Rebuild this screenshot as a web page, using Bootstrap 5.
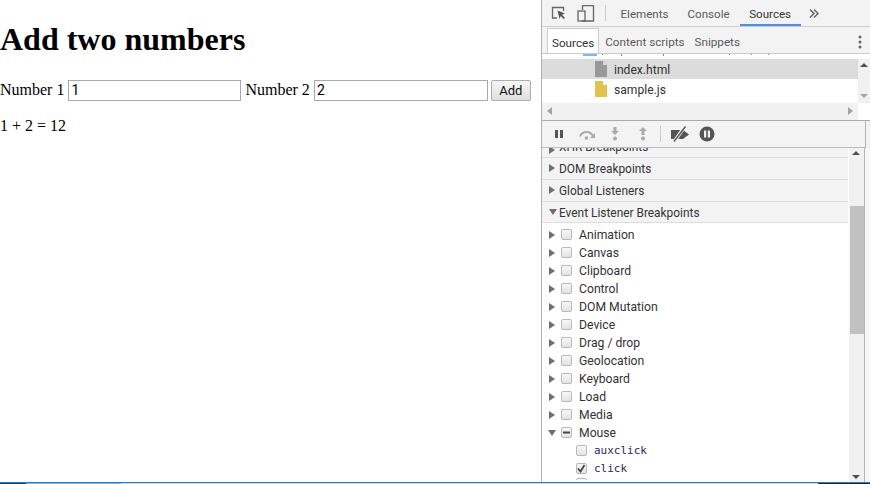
<!DOCTYPE html>
<html lang="en"><head><meta charset="utf-8"><title>Add two numbers</title>
<link rel="stylesheet" href="https://cdn.jsdelivr.net/npm/bootstrap@5.3.0/dist/css/bootstrap.min.css">
<style>
html,body{height:484px;overflow:hidden;background:#fff}
.stage{height:482px}
.pagepane{width:541px;font:16px/18px "Liberation Serif",serif;color:#000}
.pagepane h1{font:bold 32px/37px "Liberation Serif",serif;margin:21px 0 21px}
.formline{height:22px}
.pagepane label{margin-right:4px}
.numbox{width:173px;height:21px;border:1px solid #a9a9a9;padding:1px 2px;font:14px Roboto,sans-serif;color:#000;margin-right:4px;border-radius:0}
.numbox.second{width:174px}
.addbtn{width:40px;height:21px;margin-left:-1px;border:1px solid #adadad;border-radius:2px;background:linear-gradient(#f6f6f6,#dedede);font:13px Roboto,sans-serif;color:#111;padding:0}
.result{margin:16px 0 0}
.tools{width:329px;border-left:1px solid #b4b4b4;font:11.7px Roboto,sans-serif;color:#333;background:#f3f3f3}
.tabbar{height:27px;border-bottom:1px solid #ccc}
.tabbar svg{flex:none}
.sep{width:1px;height:16px;background:#ccc}
.tabsep{margin:0 5px 0 9px}
.dtab{height:26px;padding:0 9.500px;line-height:28px;color:#5a5a5a;font-size:11.600px}
.dtab.on{border-bottom:2px solid #4b8ef1;color:#333;width:61px;padding:0 0 0 9px;margin-left:1px}
.subbar{height:27px;border-bottom:1px solid #ccc;padding-left:5px}
.stab{height:26px;line-height:30px;padding:0 5px;color:#5a5a5a}
.stab.on{background:#fff;border:1px solid #ccc;border-bottom:0;color:#333;padding:0 4px;margin-top:1px;margin-right:1px;height:25px;line-height:28px}
.treewrap{height:67px;background:#fff;border-bottom:1px solid #aaa}
.treemain{width:316px;min-width:316px}
.treetop{height:5px;overflow:hidden;padding-left:41px;gap:4px;align-items:flex-start}
.folderbit{width:14px;height:2px;background:#7cb7f0}
.treerow{height:20px;padding-left:53px;font-size:12.100px;color:#333;line-height:18px;gap:7px}
.treerow span{padding-top:2px}
.treerow.sel{background:#dcdcdc}
.treerow svg{flex:none}
.hbar{height:17px;background:#f1f1f1;padding:0 5px}
.vbar{width:12px;height:44px;background:#f1f1f1;margin-top:5px;padding:4px 0 5px}
.arrowup{width:0;height:0;border:4px solid transparent;border-top:0;border-bottom:4px solid #505050}
.arrowdn{width:0;height:0;border:4px solid transparent;border-bottom:0;border-top:4px solid #a3a3a3}
.ctl{height:27px;border-bottom:1px solid #bbb;margin-right:4px;border-right:1px solid #b4b4b4;padding-left:12px}
.ctl svg{flex:none}
.lower{height:335px}
.bpane{width:307px;background:#fff;overflow:hidden}
.sechead{height:22px;background:#f3f3f3;border-bottom:1px solid #ddd;padding-left:7px;gap:4px;color:#333;font-size:11.900px;line-height:16px;margin-right:1px}
.sechead .lbl{padding-top:2px}
.sechead.evhead{height:21px;gap:2px;margin-bottom:3px}
.sechead.clip{height:10px;overflow:hidden;align-items:flex-end}
.sechead.clip span{display:block;margin-bottom:3px;line-height:14px}
.tri-r{width:0;height:0;border-left:6px solid #6e6e6e;border-top:4px solid transparent;border-bottom:4px solid transparent;flex:none}
.tri-d{width:0;height:0;border-top:6px solid #6e6e6e;border-left:4px solid transparent;border-right:4px solid transparent;flex:none}
.evrow{height:18px;padding-left:7px;font-size:12.200px;color:#333;white-space:nowrap}
.evrow .tri-d{margin-left:-1px;margin-right:-1px}
.tick{width:11px;height:11px;border:1px solid #b9b9b9;border-radius:2px;background:linear-gradient(#f8f8f8,#e2e2e2);margin:0 7px 0 6px;flex:none}
.evrow.sub{padding-left:34px;font:11px "DejaVu Sans Mono",monospace;color:#2a2a55}
.evrow.sub .tick{margin:0 7px 0 0}
.evrow.cut{height:2px;overflow:hidden;align-items:flex-start}
.tick svg{display:block}
.sbar{width:15px;background:#f1f1f1;padding:3px 0 3px 1px}
.thumb{width:14px;height:128px;background:#c1c1c1;margin-top:51px}
.arr2{margin-left:2px}
.sideedge{width:1px;background:#b4b4b4}
.rest{width:5px;background:#f7f7f7}
.taskstrip{height:2px;border-top:1px solid #1a7fd6;background:#cfd8df}
.taskstrip span{display:block;height:1px}
.seg-dark{width:26px;background:#10395c}
.seg-light{width:95px;background:#7ab5e6}
.seg-grow{flex:1 1 auto}
.seg-end{width:52px;background:#10202c}
</style></head>
<body>
<div class="stage d-flex">
 <main class="pagepane">
  <h1>Add two numbers</h1>
  <form class="formline d-flex align-items-center" onsubmit="return false">
   <label for="n1">Number 1</label><input id="n1" class="numbox" value="1">
   <label for="n2">Number 2</label><input id="n2" class="numbox second" value="2">
   <button class="addbtn">Add</button>
  </form>
  <p class="result">1 + 2 = 12</p>
 </main>
 <aside class="tools d-flex flex-column">
  <div class="tabbar d-flex align-items-center ps-2">
   <svg width="18" height="18" viewBox="0 0 18 18" fill="none"><path d="M7 14H2.500V3.500h11V7" stroke="#666" stroke-width="1.300"/><path d="M7.500 6.500l7.500 3-3 1.200 3 3.200-1.300 1.200-3-3.200-1.200 3z" fill="#555"/></svg>
   <svg class="ms-2" width="20" height="18" viewBox="0 0 20 18" fill="none"><path d="M6.500 6V1.700h11V17H6" stroke="#666" stroke-width="1.300"/><rect x="2" y="7" width="7" height="10" stroke="#666" stroke-width="1.300"/></svg>
   <span class="sep tabsep"></span>
   <span class="dtab">Elements</span><span class="dtab">Console</span><span class="dtab on">Sources</span>
   <svg class="ms-2" width="10" height="9" viewBox="0 0 10 9" fill="none" stroke="#666" stroke-width="1.500"><path d="M1 .5l4 4-4 4M5 .5l4 4-4 4"/></svg>
  </div>
  <div class="subbar d-flex align-items-start">
   <span class="stab on">Sources</span><span class="stab">Content scripts</span><span class="stab">Snippets</span>
   <svg class="ms-auto me-2 mt-2" width="4" height="14" viewBox="0 0 4 14" fill="#666"><circle cx="2" cy="2" r="1.500"/><circle cx="2" cy="7" r="1.500"/><circle cx="2" cy="12" r="1.500"/></svg>
  </div>
  <div class="treewrap d-flex">
   <div class="treemain d-flex flex-column">
    <div class="treetop d-flex"><span class="folderbit"></span><svg width="200" height="2" viewBox="0 0 200 2" fill="#888"><rect x="1" width="1" height="1"/><rect x="20" width="1" height="2"/><rect x="62" width="1" height="2"/><rect x="128" width="1" height="1"/><rect x="150" width="1" height="1"/><rect x="167" width="1" height="1"/></svg></div>
    <div class="treerow sel d-flex align-items-center">
     <svg width="12" height="16" viewBox="0 0 12 16"><path d="M0 0h8l4 4v12H0z" fill="#999"/><path d="M8 0l4 4H8z" fill="#dcdcdc"/></svg><span>index.html</span></div>
    <div class="treerow d-flex align-items-center">
     <svg width="12" height="16" viewBox="0 0 12 16"><path d="M0 0h8l4 4v12H0z" fill="#e3c24c"/><path d="M8 0l4 4H8z" fill="#fff"/></svg><span>sample.js</span></div>
    <div class="hbar d-flex align-items-center justify-content-between mt-auto">
     <svg width="5" height="8" viewBox="0 0 5 8" fill="#a3a3a3"><path d="M5 0v8L0 4z"/></svg>
     <svg width="5" height="8" viewBox="0 0 5 8" fill="#a3a3a3"><path d="M0 0v8l5-4z"/></svg>
    </div>
   </div>
   <div class="vbar d-flex flex-column align-items-center justify-content-between"><span class="arrowup"></span><span class="arrowdn"></span></div>
  </div>
  <div class="ctl d-flex align-items-center">
   <svg width="10" height="10" viewBox="0 0 10 10" fill="#555"><rect x="1" y="1" width="3" height="8"/><rect x="6" y="1" width="3" height="8"/></svg>
   <svg style="margin-left:14px" width="18" height="12" viewBox="0 0 18 12" fill="none"><path d="M2 8.500a7 7 0 0 1 13 0" stroke="#aaa" stroke-width="2"/><path d="M17 5v5h-5z" fill="#aaa"/><circle cx="8.500" cy="10" r="1.800" fill="#aaa"/></svg>
   <svg style="margin-left:14px" width="10" height="14" viewBox="0 0 10 14" fill="#aaa"><path d="M3.500 0h3v4H9L5 8 1 4h2.500z"/><circle cx="5" cy="11.500" r="2"/></svg>
   <svg style="margin-left:18px" width="10" height="14" viewBox="0 0 10 14" fill="#aaa"><path d="M5 0l4 4H6.500v4h-3V4H1z"/><circle cx="5" cy="11.500" r="2"/></svg>
   <span class="sep" style="margin:0 9px 0 12px"></span>
   <svg width="20" height="16" viewBox="0 0 20 16"><path d="M1 4h12l6 4.500-6 4.500H1z" fill="#555"/><path d="M15 0L4 16" stroke="#f3f3f3" stroke-width="3.500"/><path d="M15.500 0.500L4 15.500" stroke="#555" stroke-width="1.400"/></svg>
   <svg style="margin-left:9px" width="16" height="16" viewBox="0 0 16 16"><circle cx="8" cy="8" r="7.500" fill="#555"/><rect x="5" y="4.500" width="2.200" height="7" fill="#f3f3f3"/><rect x="8.800" y="4.500" width="2.200" height="7" fill="#f3f3f3"/></svg>
  </div>
  <div class="lower d-flex">
   <div class="bpane d-flex flex-column">
    <div class="sechead clip d-flex"><span class="tri-r d-block"></span><span>XHR Breakpoints</span></div>
    <div class="sechead d-flex align-items-center"><span class="tri-r"></span><span class="lbl">DOM Breakpoints</span></div>
    <div class="sechead d-flex align-items-center"><span class="tri-r"></span><span class="lbl">Global Listeners</span></div>
    <div class="sechead evhead d-flex align-items-center"><span class="tri-d"></span><span class="lbl">Event Listener Breakpoints</span></div>
    <div class="evrow d-flex align-items-center"><span class="tri-r"></span><span class="tick"></span>Animation</div>
    <div class="evrow d-flex align-items-center"><span class="tri-r"></span><span class="tick"></span>Canvas</div>
    <div class="evrow d-flex align-items-center"><span class="tri-r"></span><span class="tick"></span>Clipboard</div>
    <div class="evrow d-flex align-items-center"><span class="tri-r"></span><span class="tick"></span>Control</div>
    <div class="evrow d-flex align-items-center"><span class="tri-r"></span><span class="tick"></span>DOM Mutation</div>
    <div class="evrow d-flex align-items-center"><span class="tri-r"></span><span class="tick"></span>Device</div>
    <div class="evrow d-flex align-items-center"><span class="tri-r"></span><span class="tick"></span>Drag / drop</div>
    <div class="evrow d-flex align-items-center"><span class="tri-r"></span><span class="tick"></span>Geolocation</div>
    <div class="evrow d-flex align-items-center"><span class="tri-r"></span><span class="tick"></span>Keyboard</div>
    <div class="evrow d-flex align-items-center"><span class="tri-r"></span><span class="tick"></span>Load</div>
    <div class="evrow d-flex align-items-center"><span class="tri-r"></span><span class="tick"></span>Media</div>
    <div class="evrow d-flex align-items-center"><span class="tri-d"></span><span class="tick"><svg width="9" height="9" viewBox="0 0 9 9"><rect x="1" y="3.500" width="7" height="2" fill="#444"/></svg></span>Mouse</div>
    <div class="evrow sub d-flex align-items-center"><span class="tick"></span>auxclick</div>
    <div class="evrow sub d-flex align-items-center"><span class="tick"><svg width="9" height="9" viewBox="0 0 9 9" fill="none"><path d="M1 4.500l2.500 3 4-6.500" stroke="#444" stroke-width="1.800"/></svg></span>click</div>
    <div class="evrow sub cut d-flex"><span class="tick"></span></div>
   </div>
   <div class="sbar d-flex flex-column align-items-start">
    <span class="arrowup arr2"></span><span class="thumb"></span><span class="arrowdn arr2 mt-auto" style="border-top-color:#505050"></span>
   </div>
   <div class="sideedge"></div><div class="rest"></div>
  </div>
 </aside>
</div>
<div class="taskstrip d-flex"><span class="seg-dark"></span><span class="seg-light"></span><span class="seg-grow"></span><span class="seg-end"></span></div>
<script src="https://cdn.jsdelivr.net/npm/bootstrap@5.3.0/dist/js/bootstrap.bundle.min.js"></script>
</body></html>
